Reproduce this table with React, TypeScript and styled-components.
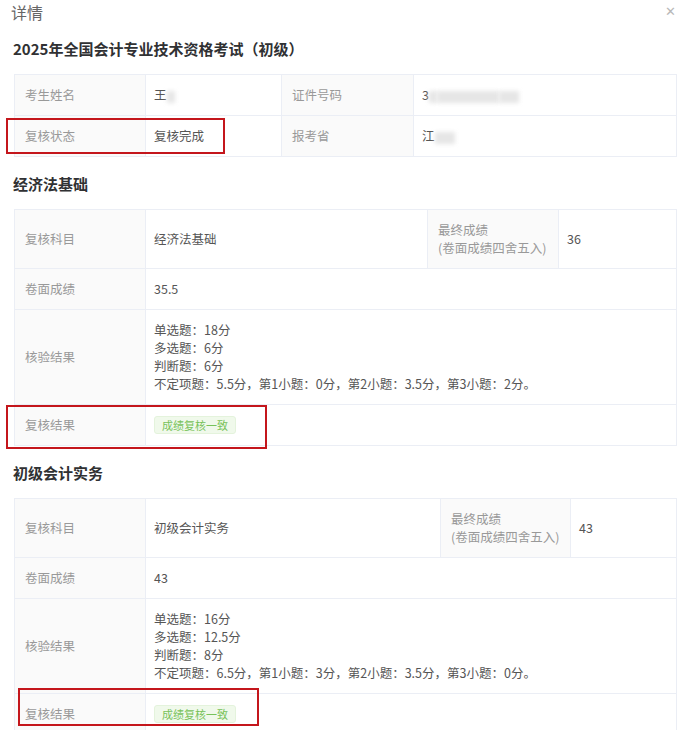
import React from 'react'
import styled, { createGlobalStyle } from 'styled-components'

const GlobalStyle = createGlobalStyle`
  body {
    margin: 0;
    background: #fff;
    font-family: "Noto Sans CJK SC", "Noto Sans", sans-serif;
  }
`

const Dialog = styled.div`
  position: relative;
  padding: 0 9px 0 14px;
`

const Header = styled.div`
  display: flex;
  justify-content: space-between;
  align-items: center;
  height: 24px;
  margin-left: -3px;
`

const DialogTitle = styled.div`
  font-size: 16px;
  color: #666;
  line-height: 24px;
`

const CloseButton = styled.button`
  border: none;
  background: none;
  padding: 0;
  margin-top: -1px;
  color: #b8b8b8;
  font-size: 13px;
  line-height: 14px;
  cursor: pointer;
`

const SectionTitle = styled.h3<{ $top: number }>`
  margin: ${p => p.$top}px 0 15px -1px;
  font-size: 15px;
  line-height: 20px;
  font-weight: 700;
  color: #303133;
`

const Table = styled.table`
  width: 662px;
  border-collapse: collapse;
  table-layout: fixed;
  font-size: 12.5px;
`

const LabelCell = styled.td`
  background: #fafafa;
  color: #999;
  border: 1px solid #ebeef5;
  padding: 11px 10px;
  line-height: 18px;
  vertical-align: middle;
`

const ValueCell = styled.td`
  color: #555;
  border: 1px solid #ebeef5;
  padding: 11px 8px;
  line-height: 18px;
  vertical-align: middle;
`

const Blur = styled.span<{ $w: number }>`
  display: inline-block;
  width: ${p => p.$w}px;
  height: 12px;
  vertical-align: middle;
  background: #e6e6e6;
  filter: blur(2px);
`

const Tag = styled.span`
  display: inline-block;
  font-size: 11px;
  line-height: 16px;
  padding: 0 7px;
  color: #78c25a;
  background: #f0f9eb;
  border: 1px solid #e4f3dc;
  border-radius: 3px;
`

const Mark = styled.div<{ $x: number; $y: number; $w: number; $h: number }>`
  position: absolute;
  left: ${p => p.$x}px;
  top: ${p => p.$y}px;
  width: ${p => p.$w}px;
  height: ${p => p.$h}px;
  border: 2px solid #c4161c;
  box-sizing: border-box;
  pointer-events: none;
`

type Subject = {
  name: string
  final: string
  raw: string
  details: string[]
  cols: number[]
}

const subjects: Subject[] = [
  {
    name: '经济法基础',
    final: '36',
    raw: '35.5',
    details: ['单选题：18分', '多选题：6分', '判断题：6分', '不定项题：5.5分，第1小题：0分，第2小题：3.5分，第3小题：2分。'],
    cols: [131, 282, 131, 118],
  },
  {
    name: '初级会计实务',
    final: '43',
    raw: '43',
    details: ['单选题：16分', '多选题：12.5分', '判断题：8分', '不定项题：6.5分，第1小题：3分，第2小题：3.5分，第3小题：0分。'],
    cols: [131, 295, 130, 106],
  },
]

function SubjectTable({ s }: { s: Subject }) {
  return (
    <Table>
      <colgroup>
        {s.cols.map((w, i) => <col key={i} style={{ width: w }} />)}
      </colgroup>
      <tbody>
        <tr>
          <LabelCell>复核科目</LabelCell>
          <ValueCell>{s.name}</ValueCell>
          <LabelCell>最终成绩<br />(卷面成绩四舍五入)</LabelCell>
          <ValueCell>{s.final}</ValueCell>
        </tr>
        <tr>
          <LabelCell>卷面成绩</LabelCell>
          <ValueCell colSpan={3}>{s.raw}</ValueCell>
        </tr>
        <tr>
          <LabelCell>核验结果</LabelCell>
          <ValueCell colSpan={3}>
            {s.details.map((d, i) => <div key={i}>{d}</div>)}
          </ValueCell>
        </tr>
        <tr>
          <LabelCell>复核结果</LabelCell>
          <ValueCell colSpan={3}><Tag>成绩复核一致</Tag></ValueCell>
        </tr>
      </tbody>
    </Table>
  )
}

export default function App() {
  return (
    <>
      <GlobalStyle />
      <Dialog>
        <Header>
          <DialogTitle>详情</DialogTitle>
          <CloseButton aria-label="关闭">✕</CloseButton>
        </Header>

        <SectionTitle $top={15}>2025年全国会计专业技术资格考试（初级）</SectionTitle>
        <Table>
          <colgroup>
            <col style={{ width: 131 }} />
            <col style={{ width: 136 }} />
            <col style={{ width: 132 }} />
            <col style={{ width: 263 }} />
          </colgroup>
          <tbody>
            <tr>
              <LabelCell>考生姓名</LabelCell>
              <ValueCell>王<Blur $w={8} /></ValueCell>
              <LabelCell>证件号码</LabelCell>
              <ValueCell>3<Blur $w={8} /><Blur $w={62} /><Blur $w={20} /></ValueCell>
            </tr>
            <tr>
              <LabelCell>复核状态</LabelCell>
              <ValueCell>复核完成</ValueCell>
              <LabelCell>报考省</LabelCell>
              <ValueCell>江<Blur $w={20} /></ValueCell>
            </tr>
          </tbody>
        </Table>

        {subjects.map(s => (
          <React.Fragment key={s.name}>
            <SectionTitle $top={17}>{s.name}</SectionTitle>
            <SubjectTable s={s} />
          </React.Fragment>
        ))}

        <Mark $x={6} $y={118} $w={219} $h={36} />
        <Mark $x={6} $y={405} $w={261} $h={44} />
        <Mark $x={18} $y={688} $w={241} $h={38} />
      </Dialog>
    </>
  )
}
